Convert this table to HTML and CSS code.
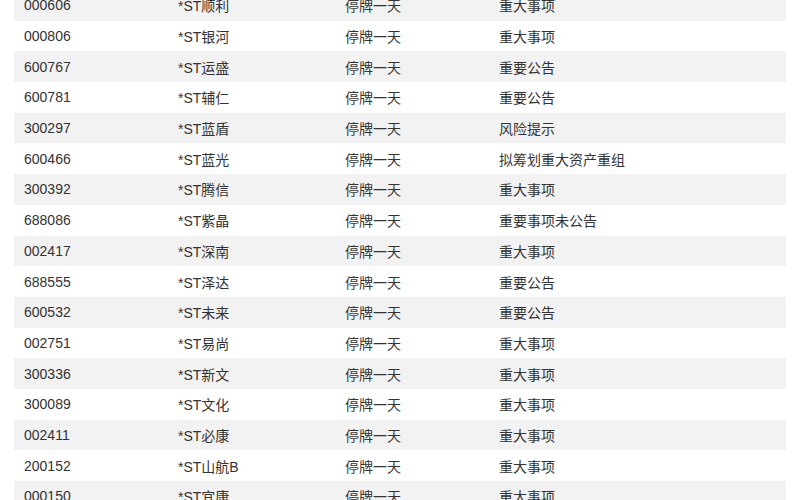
FILE: index.html
```html
<!DOCTYPE html>
<html lang="zh">
<head>
<meta charset="utf-8">
<link rel="stylesheet" href="styles.css">
</head>
<body>
<div class="table">
  <div class="row"><span>000606</span><span>*ST顺利</span><span>停牌一天</span><span>重大事项</span></div>
  <div class="row"><span>000806</span><span>*ST银河</span><span>停牌一天</span><span>重大事项</span></div>
  <div class="row"><span>600767</span><span>*ST运盛</span><span>停牌一天</span><span>重要公告</span></div>
  <div class="row"><span>600781</span><span>*ST辅仁</span><span>停牌一天</span><span>重要公告</span></div>
  <div class="row"><span>300297</span><span>*ST蓝盾</span><span>停牌一天</span><span>风险提示</span></div>
  <div class="row"><span>600466</span><span>*ST蓝光</span><span>停牌一天</span><span>拟筹划重大资产重组</span></div>
  <div class="row"><span>300392</span><span>*ST腾信</span><span>停牌一天</span><span>重大事项</span></div>
  <div class="row"><span>688086</span><span>*ST紫晶</span><span>停牌一天</span><span>重要事项未公告</span></div>
  <div class="row"><span>002417</span><span>*ST深南</span><span>停牌一天</span><span>重大事项</span></div>
  <div class="row"><span>688555</span><span>*ST泽达</span><span>停牌一天</span><span>重要公告</span></div>
  <div class="row"><span>600532</span><span>*ST未来</span><span>停牌一天</span><span>重要公告</span></div>
  <div class="row"><span>002751</span><span>*ST易尚</span><span>停牌一天</span><span>重大事项</span></div>
  <div class="row"><span>300336</span><span>*ST新文</span><span>停牌一天</span><span>重大事项</span></div>
  <div class="row"><span>300089</span><span>*ST文化</span><span>停牌一天</span><span>重大事项</span></div>
  <div class="row"><span>002411</span><span>*ST必康</span><span>停牌一天</span><span>重大事项</span></div>
  <div class="row"><span>200152</span><span>*ST山航B</span><span>停牌一天</span><span>重大事项</span></div>
  <div class="row"><span>000150</span><span>*ST宜康</span><span>停牌一天</span><span>重大事项</span></div>
</div>
</body>
</html>
```
FILE: styles.css
```css
html, body {
  margin: 0;
  padding: 0;
  background: #ffffff;
  overflow: hidden;
}
body {
  width: 800px;
  height: 500px;
  font-family: "Liberation Sans", "Noto Sans CJK SC", sans-serif;
  font-size: 14px;
  color: #333333;
}
.table {
  margin: -10px 14px 0 14px;
}
.row {
  display: grid;
  grid-template-columns: 154px 167px 154px 1fr;
  align-items: center;
  height: 30.7px;
  padding-left: 10px;
  background: #ffffff;
}
.row:nth-child(odd) {
  background: #f2f2f2;
}
.row span {
  white-space: nowrap;
}
```
